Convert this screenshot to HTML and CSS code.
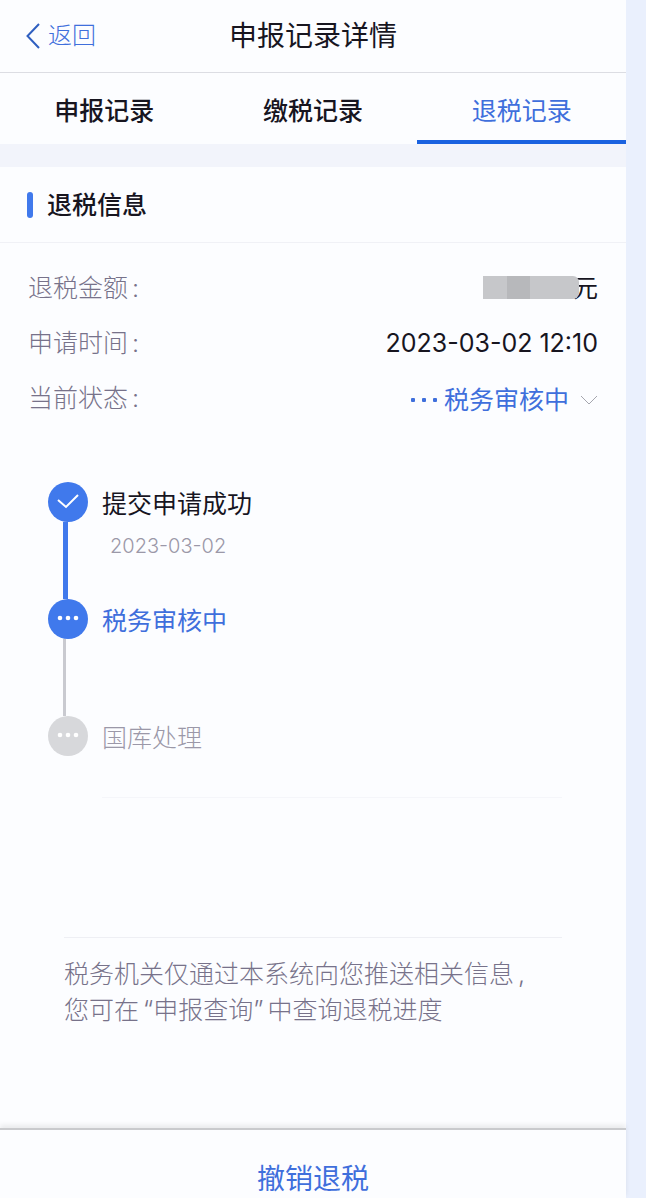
FILE: index.html
```html
<!DOCTYPE html>
<html lang="zh-CN">

<head>
  <meta charset="UTF-8" />
  <meta name="viewport" content="width=device-width, initial-scale=1.0" />
  <title>申报记录详情</title>
  <link rel="stylesheet" href="styles.css">
</head>

<body>
  <div class="page">
    <header class="header">
      <a href="#" class="back-link">
        <svg class="back-icon" viewBox="0 0 14 26" aria-hidden="true">
          <path d="M13 1 L1.5 13 L13 25" />
        </svg>
        返回
      </a>
      <h1>申报记录详情</h1>
    </header>

    <nav class="tabs">
      <a href="#" class="tab">申报记录</a>
      <a href="#" class="tab">缴税记录</a>
      <a href="#" class="tab active" aria-current="page">退税记录</a>
    </nav>

    <main class="content">
      <h2 class="section-title">退税信息</h2>

      <dl class="info-list">
        <div class="info-row">
          <dt>退税金额<span class="colon">:</span></dt>
          <dd class="amount"><span class="mask"></span>元</dd>
        </div>
        <div class="info-row">
          <dt>申请时间<span class="colon">:</span></dt>
          <dd>2023-03-02 12:10</dd>
        </div>
        <div class="info-row">
          <dt>当前状态<span class="colon">:</span></dt>
          <dd>
            <button type="button" class="status-btn">
              <svg class="status-dots" viewBox="0 0 26 4" aria-hidden="true">
                <rect x="0" y="0" width="4" height="4" rx="1" />
                <rect x="11" y="0" width="4" height="4" rx="1" />
                <rect x="22" y="0" width="4" height="4" rx="1" />
              </svg>
              税务审核中
              <svg class="chevron" viewBox="0 0 18 10" aria-hidden="true">
                <path d="M1 1 L9 9 L17 1" />
              </svg>
            </button>
          </dd>
        </div>
      </dl>

      <ol class="timeline">
        <li class="step done">
          <div class="step-marker">
            <svg class="step-icon" viewBox="0 0 40 40" aria-hidden="true">
              <circle cx="20" cy="20" r="20" />
              <path d="M10 18 L18 25 L30 13" />
            </svg>
            <span class="step-line"></span>
          </div>
          <div class="step-body">
            <h3>提交申请成功</h3>
            <time datetime="2023-03-02">2023-03-02</time>
          </div>
        </li>
        <li class="step current">
          <div class="step-marker">
            <svg class="step-icon" viewBox="0 0 40 40" aria-hidden="true">
              <circle cx="20" cy="20" r="20" />
              <g class="dots">
                <circle cx="12" cy="19" r="2.3" />
                <circle cx="20" cy="19" r="2.3" />
                <circle cx="28" cy="19" r="2.3" />
              </g>
            </svg>
            <span class="step-line"></span>
          </div>
          <div class="step-body">
            <h3>税务审核中</h3>
          </div>
        </li>
        <li class="step pending">
          <div class="step-marker">
            <svg class="step-icon" viewBox="0 0 40 40" aria-hidden="true">
              <circle cx="20" cy="20" r="20" />
              <g class="dots">
                <circle cx="12" cy="19" r="2.3" />
                <circle cx="20" cy="19" r="2.3" />
                <circle cx="28" cy="19" r="2.3" />
              </g>
            </svg>
          </div>
          <div class="step-body">
            <h3>国库处理</h3>
          </div>
        </li>
      </ol>

      <div class="notice">
        <p>税务机关仅通过本系统向您推送相关信息<span class="comma">,</span><br>您可在<span class="quoted">“申报查询”</span>中查询退税进度</p>
      </div>
    </main>

    <footer class="footer">
      <button type="button" class="cancel-btn">撤销退税</button>
    </footer>
  </div>
</body>

</html>
```

FILE: styles.css
```css
:root {
  --primary: #3f6fdc;
  --primary-fill: #4079ec;
  --underline: #1a62e0;
  --text: #17151f;
  --label: #77728a;
  --muted: #9b98a8;
  --surface: #fcfdff;
  --band: #f2f4fb;
  --gutter: #eaf0fd;
}

* {
  box-sizing: border-box;
}

body {
  margin: 0;
  padding-right: 20px;
  font-family: Inter, 'Noto Sans CJK SC', sans-serif;
  font-size: 25px;
  line-height: 36px;
  background: var(--gutter);
  color: var(--text);
}

h1,
h2,
h3,
p,
dl,
dd,
ol {
  margin: 0;
  padding: 0;
}

a {
  text-decoration: none;
}

button {
  padding: 0;
  border: none;
  background: none;
  font: inherit;
  cursor: pointer;
}

.page {
  display: flex;
  flex-direction: column;
  min-height: 100vh;
  background: var(--surface);
}

.header {
  display: grid;
  grid-template-columns: 1fr auto 1fr;
  align-items: center;
  height: 73px;
  padding: 0 26px;
  border-bottom: 1px solid #dcdde3;
}

.header h1 {
  font-size: 28px;
  font-weight: 400;
}

.back-link {
  display: flex;
  align-items: center;
  gap: 8px;
  color: var(--primary);
  font-size: 24px;
  font-weight: 300;
}

.back-icon {
  width: 14px;
  height: 26px;
  fill: none;
  stroke: #2f5fc0;
  stroke-width: 2;
}

.tabs {
  display: grid;
  grid-template-columns: repeat(3, 1fr);
  height: 71px;
}

.tab {
  padding-top: 20px;
  border-bottom: 4px solid transparent;
  color: var(--text);
  font-weight: 500;
  text-align: center;
}

.tab.active {
  border-color: var(--underline);
  color: var(--primary);
  font-weight: 400;
}

.content {
  flex: 1;
  border-top: 23px solid var(--band);
}

.section-title {
  display: flex;
  align-items: center;
  gap: 14px;
  height: 76px;
  padding: 0 27px;
  border-bottom: 1px solid #f0f1f6;
  font-size: 25px;
  font-weight: 500;
}

.section-title::before {
  content: '';
  width: 6px;
  height: 26px;
  border-radius: 3px;
  background: var(--primary-fill);
}

.info-list {
  padding: 17px 28px 0;
}

.info-row {
  display: flex;
  align-items: center;
  justify-content: space-between;
  height: 55px;
}

.info-row dt {
  color: var(--label);
  font-weight: 300;
}

.colon {
  margin-left: 4px;
}

.amount {
  display: flex;
  align-items: center;
}

/* greyed-out amount, overlaps the left edge of the unit */
.mask {
  position: relative;
  width: 96px;
  height: 23px;
  margin-right: -6px;
  border-radius: 0 6px 6px 0;
  background: linear-gradient(to right, #c6c7ca 24px, #b7b8bb 24px, #b7b8bb 47px, #c6c7ca 47px);
}

.status-btn {
  display: flex;
  align-items: center;
  padding-top: 4px;
  color: var(--primary);
}

.status-dots {
  width: 26px;
  height: 4px;
  margin-right: 7px;
  fill: var(--primary);
}

.chevron {
  width: 18px;
  height: 10px;
  margin-left: 11px;
  fill: none;
  stroke: #a5a6ae;
  stroke-width: 1;
}

.timeline {
  margin: 57px 64px 0 48px;
  list-style: none;
}

.step {
  display: flex;
  gap: 14px;
  height: 117px;
}

.step-marker {
  display: flex;
  flex-direction: column;
  width: 40px;
}

.step-icon {
  flex: none;
  width: 40px;
  height: 40px;
  fill: var(--primary-fill);
}

.step-icon path {
  fill: none;
  stroke: #fff;
  stroke-width: 2;
}

.step-icon .dots {
  fill: #fff;
}

.step-line {
  flex: 1;
  width: 5px;
  margin-left: 15px;
  background: var(--primary-fill);
}

.step-body {
  flex: 1;
  padding-top: 4px;
}

.step h3 {
  font-size: 25px;
  font-weight: 400;
}

.step time {
  display: block;
  padding: 6px 8px;
  color: var(--muted);
  font-size: 20px;
  font-weight: 300;
}

.current h3 {
  color: var(--primary);
}

.current .step-line {
  width: 3px;
  background: #c9cad0;
}

.pending {
  height: 82px;
}

.pending .step-icon {
  fill: #d7d8db;
}

.pending .step-body {
  border-bottom: 1px solid #f5f6fa;
}

.pending h3 {
  color: var(--muted);
  font-weight: 300;
}

.notice {
  margin: 139px 64px 0;
  padding-top: 18px;
  border-top: 1px solid #eeeff4;
  color: var(--label);
  font-weight: 300;
  white-space: nowrap;
}

.comma {
  margin-left: 4px;
}

.quoted {
  margin: 0 4px;
}

.footer {
  border-top: 2px solid #c9cacd;
  box-shadow: 0 -3px 5px rgba(0, 0, 0, 0.08);
}

.cancel-btn {
  display: block;
  width: 100%;
  padding-top: 30px;
  color: var(--primary);
  font-size: 28px;
  line-height: 38px;
}
```
